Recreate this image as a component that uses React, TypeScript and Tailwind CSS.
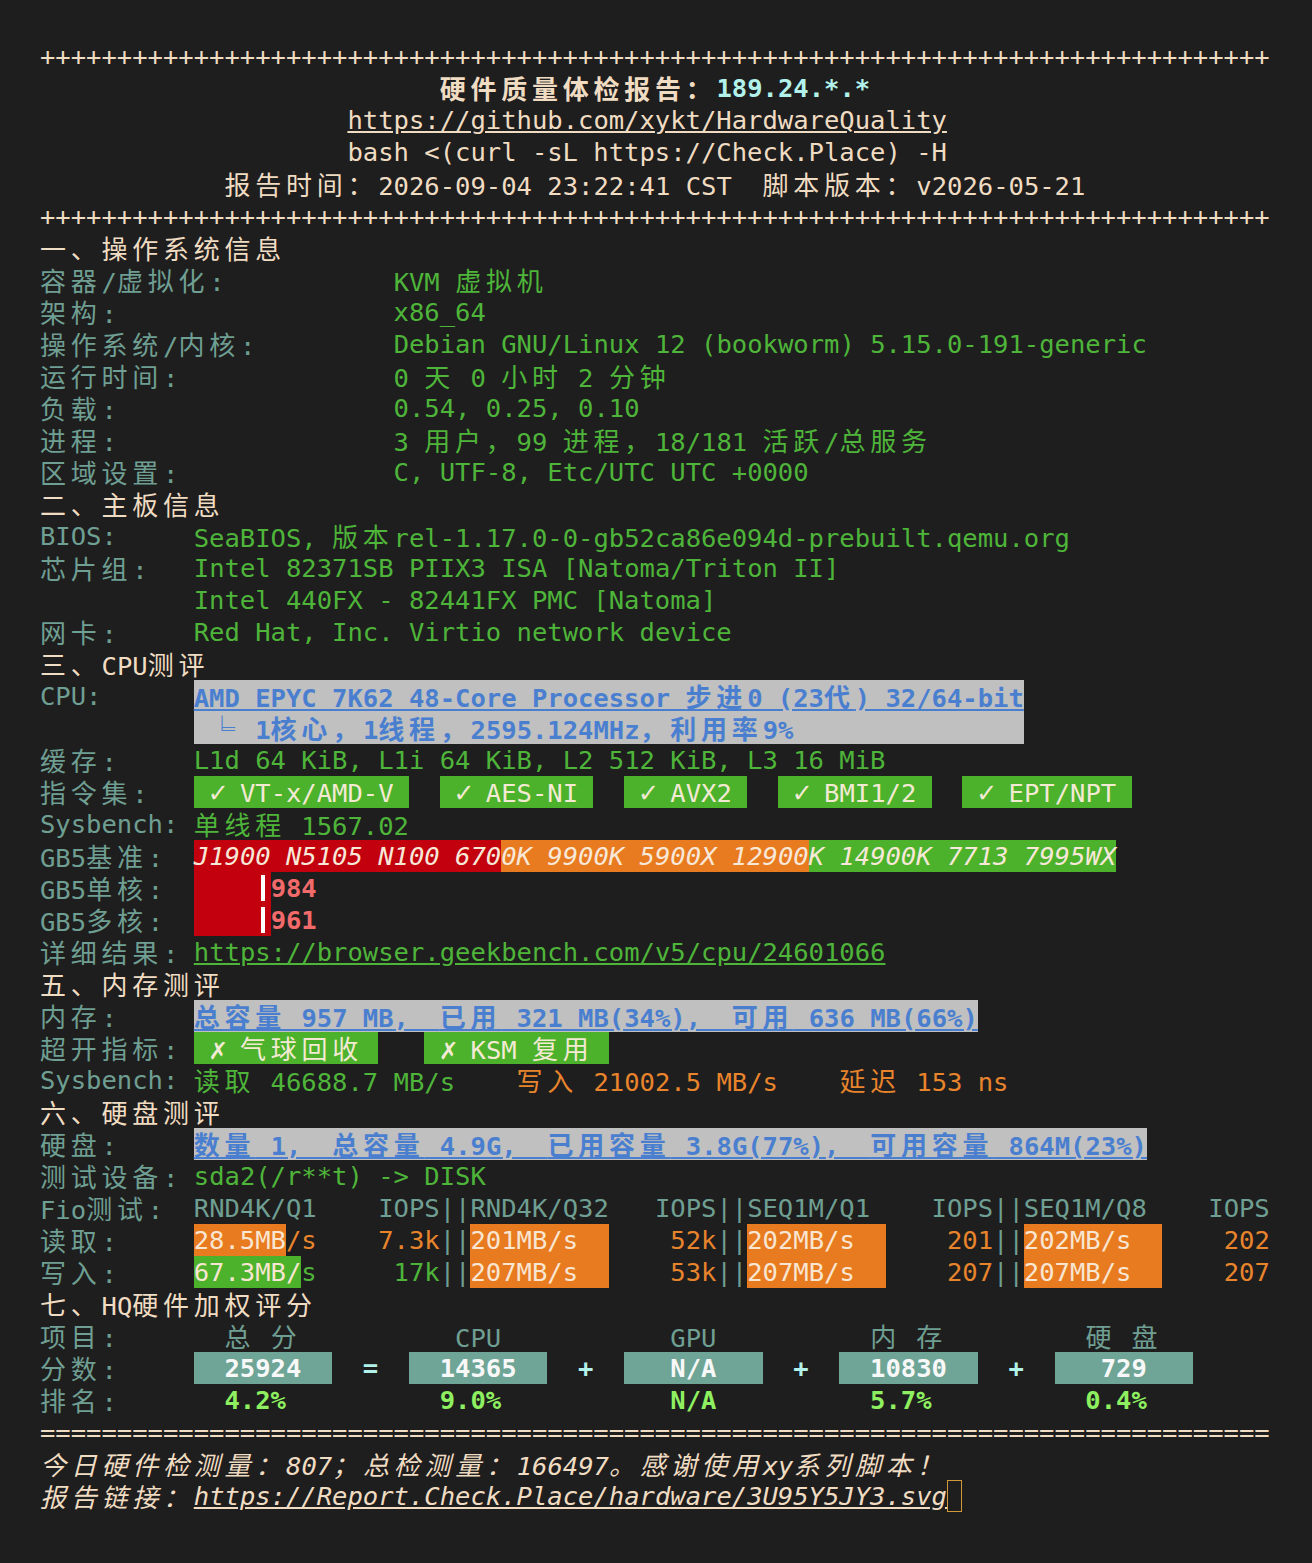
import { Fragment, type ReactNode } from 'react'

// wide chars (CJK, full-width punctuation, box drawing) take two terminal cells
const WIDE = /[\u2500-\u257F\u2E80-\u9FFF\u3000-\u303F\uFF00-\uFF60]/
const SYM = /[\u2713\u2717]/

const cw = (s: string) => {
  let n = 0
  for (const ch of s) n += WIDE.test(ch) ? 2 : 1
  return n
}
const pad = (s: string, n: number) => s + ' '.repeat(Math.max(0, n - cw(s)))
const sp = (n: number) => ' '.repeat(n)

function Txt({ s, u }: { s: string; u?: boolean }) {
  const out: ReactNode[] = []
  let buf = ''
  let kind = ''
  const flush = () => {
    if (!buf) return
    const k = out.length
    if (kind === 'w')
      out.push(
        <span
          key={k}
          className={
            "inline-block h-8 font-['Noto_Sans_CJK_SC',sans-serif] text-[26px] leading-8 tracking-[4.75px]" +
            (u ? ' underline' : '')
          }
        >
          {buf}
        </span>
      )
    else if (kind === 's')
      out.push(
        <span key={k} className="inline-block h-8 w-[15.375px] text-center text-[29px] leading-8 font-bold">
          {buf}
        </span>
      )
    else out.push(<Fragment key={k}>{buf}</Fragment>)
    buf = ''
  }
  for (const ch of s) {
    const k = SYM.test(ch) ? 's' : WIDE.test(ch) ? 'w' : 'a'
    if (k !== kind || k === 's') {
      flush()
      kind = k
    }
    buf += ch
  }
  flush()
  return <>{out}</>
}

const S = ({ c = '', children }: { c?: string; children: string }) => (
  <span className={c}>
    <Txt s={children} u={c.includes('underline')} />
  </span>
)

const R = ({ children }: { children: ReactNode }) => <div className="flex h-8 whitespace-pre">{children}</div>

const TEAL = 'text-[#6f9f92]'
const GREEN = 'text-[#4eb53a]'
const ORANGE = 'text-[#e8842c]'
const CYAN = 'text-[#b2f2ea] font-bold'
const BOX = 'bg-[#c0c0c0] text-[#4a7fd0] font-bold'
const BADGE = 'bg-[#4cb22b] text-[#f4ead4]'
const OBG = 'bg-[#e87a20] text-[#f8e6d2]'
const GBG = 'bg-[#4cb22b] text-[#f8e6d2]'
const SCORE = 'bg-[#6fa596] text-[#f8f8f8] font-bold'
const RANK = 'text-[#8ef060] font-bold'

const L = (s: string, n = 10) => <S c={TEAL}>{pad(s, n)}</S>

const sysInfo = [
  ['容器/虚拟化:', 'KVM 虚拟机'],
  ['架构:', 'x86_64'],
  ['操作系统/内核:', 'Debian GNU/Linux 12 (bookworm) 5.15.0-191-generic'],
  ['运行时间:', '0 天 0 小时 2 分钟'],
  ['负载:', '0.54, 0.25, 0.10'],
  ['进程:', '3 用户，99 进程，18/181 活跃/总服务'],
  ['区域设置:', 'C, UTF-8, Etc/UTC UTC +0000'],
]

const board = [
  ['BIOS:', 'SeaBIOS, 版本rel-1.17.0-0-gb52ca86e094d-prebuilt.qemu.org'],
  ['芯片组:', 'Intel 82371SB PIIX3 ISA [Natoma/Triton II]'],
  ['', 'Intel 440FX - 82441FX PMC [Natoma]'],
  ['网卡:', 'Red Hat, Inc. Virtio network device'],
]

const GbBar = () => (
  <span className="flex w-[1ch] items-center justify-center bg-[#c2000e]">
    <span className="h-[26px] w-[4px] bg-white" />
  </span>
)

export default function App() {
  return (
    <div className="min-h-[1563px] w-full bg-[#1e1e1e] pl-10 pt-10 font-['DejaVu_Sans_Mono',monospace] text-[25.54px] leading-8 text-[#f0dcc2] [text-spacing-trim:space-all]">
      <R>
        <S>{'+'.repeat(80)}</S>
      </R>
      <R>
        <S c="font-bold">{sp(26) + '硬件质量体检报告：'}</S>
        <S c={CYAN}>189.24.*.*</S>
      </R>
      <R>
        <S>{sp(20)}</S>
        <S c="underline">https://github.com/xykt/HardwareQuality</S>
      </R>
      <R>
        <S>{sp(20) + 'bash <(curl -sL https://Check.Place) -H'}</S>
      </R>
      <R>
        <S>{sp(12) + '报告时间：2026-09-04 23:22:41 CST  脚本版本：v2026-05-21'}</S>
      </R>
      <R>
        <S>{'+'.repeat(80)}</S>
      </R>

      {/* 一、操作系统信息 */}
      <R>
        <S>一、操作系统信息</S>
      </R>
      {sysInfo.map(([k, v]) => (
        <R key={k}>
          {L(k, 23)}
          <S c={GREEN}>{v}</S>
        </R>
      ))}

      {/* 二、主板信息 */}
      <R>
        <S>二、主板信息</S>
      </R>
      {board.map(([k, v]) => (
        <R key={v}>
          {L(k)}
          <S c={GREEN}>{v}</S>
        </R>
      ))}

      {/* 三、CPU测评 */}
      <R>
        <S>三、CPU测评</S>
      </R>
      <R>
        {L('CPU:')}
        <S c={BOX + ' underline'}>AMD EPYC 7K62 48-Core Processor 步进0 (23代) 32/64-bit</S>
      </R>
      <R>
        {L('')}
        <S c={BOX}>{pad(' ╘ 1核心，1线程，2595.124MHz，利用率9%', 54)}</S>
      </R>
      <R>
        {L('缓存:')}
        <S c={GREEN}>L1d 64 KiB, L1i 64 KiB, L2 512 KiB, L3 16 MiB</S>
      </R>
      <R>
        {L('指令集:')}
        <S c={BADGE}>{' ✓ VT-x/AMD-V '}</S>
        <S>{'  '}</S>
        <S c={BADGE}>{' ✓ AES-NI '}</S>
        <S>{'  '}</S>
        <S c={BADGE}>{' ✓ AVX2 '}</S>
        <S>{'  '}</S>
        <S c={BADGE}>{' ✓ BMI1/2 '}</S>
        <S>{'  '}</S>
        <S c={BADGE}>{' ✓ EPT/NPT '}</S>
      </R>
      <R>
        {L('Sysbench:')}
        <S c={GREEN}>单线程 1567.02</S>
      </R>
      <R>
        {L('GB5基准:')}
        <S c="bg-[#c2000e] italic text-[#f8e8d8]">J1900 N5105 N100 670</S>
        <S c="bg-[#e87a20] italic text-[#f8e8d8]">0K 9900K 5900X 12900</S>
        <S c="bg-[#4cb22b] italic text-[#f8e8d8]">K 14900K 7713 7995WX</S>
      </R>
      <R>
        {L('GB5单核:')}
        <S c="bg-[#c2000e]">{'    '}</S>
        <GbBar />
        <S c="font-bold text-[#f26a6a]">984</S>
      </R>
      <R>
        {L('GB5多核:')}
        <S c="bg-[#c2000e]">{'    '}</S>
        <GbBar />
        <S c="font-bold text-[#f26a6a]">961</S>
      </R>
      <R>
        {L('详细结果:')}
        <S c={GREEN + ' underline'}>https://browser.geekbench.com/v5/cpu/24601066</S>
      </R>

      {/* 五、内存测评 */}
      <R>
        <S>五、内存测评</S>
      </R>
      <R>
        {L('内存:')}
        <S c={BOX + ' underline'}>{'总容量 957 MB,  已用 321 MB(34%),  可用 636 MB(66%)'}</S>
      </R>
      <R>
        {L('超开指标:')}
        <S c={BADGE}>{' ✗ 气球回收 '}</S>
        <S>{'   '}</S>
        <S c={BADGE}>{' ✗ KSM 复用 '}</S>
      </R>
      <R>
        {L('Sysbench:')}
        <S c={GREEN}>{'读取 46688.7 MB/s    '}</S>
        <S c={ORANGE}>{'写入 21002.5 MB/s    延迟 153 ns'}</S>
      </R>

      {/* 六、硬盘测评 */}
      <R>
        <S>六、硬盘测评</S>
      </R>
      <R>
        {L('硬盘:')}
        <S c={BOX + ' underline'}>{'数量 1,  总容量 4.9G,  已用容量 3.8G(77%),  可用容量 864M(23%)'}</S>
      </R>
      <R>
        {L('测试设备:')}
        <S c={GREEN}>{'sda2(/r**t) -> DISK'}</S>
      </R>
      <R>
        {L('Fio测试:')}
        <S c={TEAL}>{'RND4K/Q1    IOPS||RND4K/Q32   IOPS||SEQ1M/Q1    IOPS||SEQ1M/Q8    IOPS'}</S>
      </R>
      <R>
        {L('读取:')}
        <S c={OBG}>28.5MB</S>
        <S c={ORANGE}>{'/s    7.3k'}</S>
        <S c={TEAL}>||</S>
        <S c={OBG}>{'201MB/s  '}</S>
        <S c={ORANGE}>{'    52k'}</S>
        <S c={TEAL}>||</S>
        <S c={OBG}>{'202MB/s  '}</S>
        <S c={ORANGE}>{'    201'}</S>
        <S c={TEAL}>||</S>
        <S c={OBG}>{'202MB/s  '}</S>
        <S c={ORANGE}>{'    202'}</S>
      </R>
      <R>
        {L('写入:')}
        <S c={GBG}>67.3MB/</S>
        <S c={GREEN}>{'s     17k'}</S>
        <S c={TEAL}>||</S>
        <S c={OBG}>{'207MB/s  '}</S>
        <S c={ORANGE}>{'    53k'}</S>
        <S c={TEAL}>||</S>
        <S c={OBG}>{'207MB/s  '}</S>
        <S c={ORANGE}>{'    207'}</S>
        <S c={TEAL}>||</S>
        <S c={OBG}>{'207MB/s  '}</S>
        <S c={ORANGE}>{'    207'}</S>
      </R>

      {/* 七、HQ硬件加权评分 */}
      <R>
        <S>七、HQ硬件加权评分</S>
      </R>
      <R>
        {L('项目:', 12)}
        <S c={TEAL}>{'总 分' + sp(10) + 'CPU' + sp(11) + 'GPU' + sp(10) + '内 存' + sp(9) + '硬 盘'}</S>
      </R>
      <R>
        {L('分数:')}
        <S c={SCORE}>{'  25924  '}</S>
        <S c={CYAN}>{'  =  '}</S>
        <S c={SCORE}>{'  14365  '}</S>
        <S c={CYAN}>{'  +  '}</S>
        <S c={SCORE}>{'   N/A   '}</S>
        <S c={CYAN}>{'  +  '}</S>
        <S c={SCORE}>{'  10830  '}</S>
        <S c={CYAN}>{'  +  '}</S>
        <S c={SCORE}>{'   729   '}</S>
      </R>
      <R>
        {L('排名:', 12)}
        <S c={RANK}>{'4.2%' + sp(10) + '9.0%' + sp(11) + 'N/A' + sp(10) + '5.7%' + sp(10) + '0.4%'}</S>
      </R>
      <R>
        <S>{'='.repeat(80)}</S>
      </R>
      <R>
        <S c="italic">今日硬件检测量：807；总检测量：166497。感谢使用xy系列脚本！</S>
      </R>
      <R>
        <S c="italic">报告链接：</S>
        <S c="italic underline">https://Report.Check.Place/hardware/3U95Y5JY3.svg</S>
        <span className="w-[1ch] border-[1.5px] border-[#d09a3a]" />
      </R>
    </div>
  )
}
